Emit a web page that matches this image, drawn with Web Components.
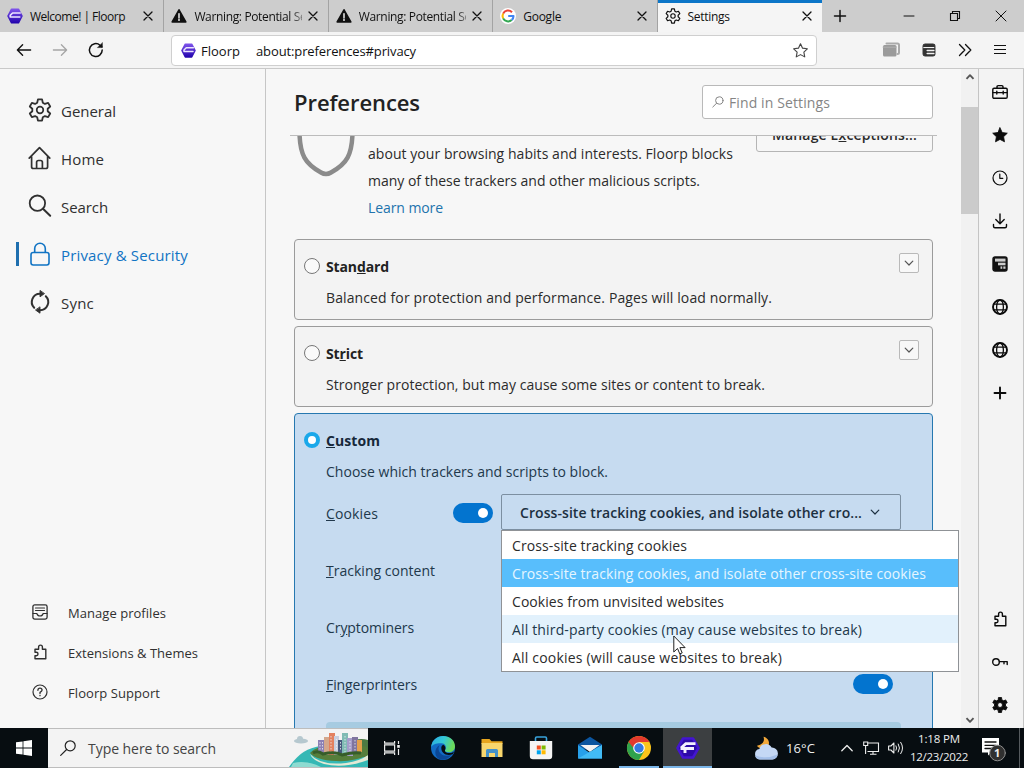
<!DOCTYPE html>
<html lang="en">
<head>
<meta charset="utf-8">
<title>Settings</title>
<style>
  body {
    margin: 0;
    width: 1024px;
    height: 768px;
    overflow: hidden;
    font-family: "Open Sans", "Noto Sans", sans-serif;
    font-size: 14px;
    color: #2b2b2b;
    background: #f7f7f7;
  }
</style>
</head>
<body>
<floorp-desktop></floorp-desktop>

<script>
// closed outline of a cog, first tooth pointing up
function cog(c, outer, inner, teeth, top, base) {
  const points = [];
  for (let i = 0; i < teeth; i++) {
    const mid = i * 360 / teeth - 90;
    [[inner, -base], [outer, -top], [outer, top], [inner, base]].forEach(([r, a]) => {
      const rad = (mid + a) * Math.PI / 180;
      points.push((c + r * Math.cos(rad)).toFixed(2) + " " + (c + r * Math.sin(rad)).toFixed(2));
    });
  }
  return "M" + points.join("L") + "Z";
}

const STAR = "M8 .8l2.2 4.7 5.1.7-3.7 3.5.9 5.1L8 12.4l-4.5 2.4.9-5.1L.7 6.2l5.1-.7z";
const PUZZLE = `<path d="M3 5.2h3.6V3a1.9 1.9 0 0 1 3.8 0v2.2h3.4v9.6H3v-3.1h1.3a1.7 1.7 0 0 0 0-3.4H3z" stroke-width="1.4"/>`;
const GLOBE = `<circle cx="8" cy="8" r="7" stroke-width="1.9"/><ellipse cx="8" cy="8" rx="3.4" ry="7" stroke-width="1.3"/><path d="M1.6 5.2h12.8M1.6 10.8h12.8" stroke-width="1.3"/>`;

// [viewBox size, markup]; strokes use currentColor unless set
const ICONS = {
  floorp: [16, `<defs><linearGradient id="g" x1="0" y1="0" x2="0" y2="1"><stop offset="0" stop-color="#7d52ea"/><stop offset="1" stop-color="#2405ae"/></linearGradient></defs>
    <path d="M4.6 1.2h6.8L15 8l-3.600 6.800H4.600L1 8z" fill="url(#g)" stroke="url(#g)" stroke-width="1.600"/>
    <path d="M13.200 5H5.600L3.200 7.400V9h9.600" stroke="#ece4ff" stroke-width="1.600"/>`],
  warning: [16, `<path d="M8 1.8L14.8 14H1.2z" fill="currentColor" stroke-width="1.6"/><path d="M8 5.6v4.2M8 11.3v1.1" stroke="#fff" stroke-width="1.4"/>`],
  google: [16, `<circle cx="8" cy="8" r="8" fill="#fff" stroke="none"/><g stroke-width="2.1" stroke-linecap="butt">
    <path d="M12 4.2A5.5 5.5 0 0 0 3.1 5.6" stroke="#ea4335"/><path d="M3.1 5.6a5.5 5.5 0 0 0 0 4.8" stroke="#fbbc05"/>
    <path d="M3.1 10.4a5.5 5.5 0 0 0 8.6 1.6" stroke="#34a853"/><path d="M11.7 12A5.2 5.2 0 0 0 13.5 8H8.2" stroke="#4285f4"/></g>`],
  close: [10, `<path d="M1 1l8 8M9 1L1 9" stroke-width="1.3"/>`],
  plus: [12, `<path d="M6 .5v11M.5 6h11" stroke-width="1.5"/>`],
  thickPlus: [12, `<path d="M6 .5v11M.5 6h11" stroke-width="1.9"/>`],
  minimize: [12, `<path d="M1 6h10" stroke-width="1"/>`],
  restore: [12, `<path d="M1.5 3.5h7v7h-7zM3.5 3.5v-2h7v7h-2" stroke-width="1.1" stroke-linejoin="miter"/>`],
  winClose: [12, `<path d="M1 1l10 10M11 1L1 11" stroke-width="1"/>`],
  back: [16, `<path d="M14.600 8H1.6M6.600 2.800L1.4 8l5.200 5.200" stroke-width="1.4"/>`],
  forward: [16, `<path d="M1.400 8h13M9.400 2.800L14.6 8l-5.200 5.200" stroke-width="1.3"/>`],
  reload: [16, `<path d="M14.2 8A6.4 6.4 0 1 1 12 3.2l1.8 1.6" stroke-width="1.5"/><path d="M14.4.9v4.7H9.7z" fill="currentColor" stroke-width=".5"/>`],
  starLine: [16, `<path d="${STAR}" stroke-width="1.2"/>`],
  star: [16, `<path d="${STAR}" fill="currentColor" stroke-width=".8"/>`],
  stack: [18, `<path d="M4.5 2.5h11q1.5 0 1.5 1.500v7.500q0 1.500-1.500 1.500" stroke="#aaa" stroke-width="2"/><rect x="1" y="4" width="13.500" height="11.500" rx="1.500" fill="#9b9b9b" stroke="none"/><path d="M1 6.200h13.500" stroke="#b8b8b8" stroke-width=".8"/>`],
  server: [16, `<rect x="1.200" y="1.200" width="13.600" height="13.600" rx="2.500" fill="#333" stroke="#333" stroke-width="1.200"/><path d="M1.500 5.200h12.500" stroke="#f3f3f3" stroke-width="1.200" stroke-linecap="butt"/><path d="M6 8.500h7.500M6 12h7.500" stroke="#f3f3f3" stroke-width="1.800"/>`],
  blocks: [16, `<rect x="1" y="1" width="14" height="14" rx="2" fill="#111" stroke="#111" stroke-width="1.400"/><g fill="#ccc" stroke="none"><rect x="3" y="2.600" width="10.500" height="3"/><rect x="6" y="6.700" width="7.500" height="2.600"/><rect x="8.500" y="10.400" width="1.800" height="2.400"/><rect x="11.300" y="10.400" width="2.200" height="2.400"/></g>`],
  more: [14, `<path d="M1.500 1.500L6.800 7l-5.300 5.500M7.500 1.500L12.800 7l-5.300 5.500" stroke-width="1.300"/>`],
  menu: [12, `<path d="M0 1.500h12M0 5.500h12M0 9.500h12" stroke-width="1.200" stroke-linecap="butt"/>`],
  gear: [24, `<path d="${cog(12, 10.8, 7.8, 6, 11, 21)}" stroke-width="1.800"/><circle cx="12" cy="12" r="3.300" stroke-width="1.700"/>`],
  gearFill: [16, `<path fill-rule="evenodd" d="${cog(8, 7.6, 5.6, 6, 12, 18)}M5.500 8a2.500 2.500 0 1 0 5 0a2.500 2.500 0 1 0-5 0z" fill="currentColor" stroke-width=".9"/>`],
  home: [24, `<path d="M1.200 12.200L11.500 1.600l10.300 10.600M3.600 10.500v10.200q0 1.800 1.800 1.800h12.400q1.800 0 1.800-1.800V10.500M8.600 22.300v-6q0-1.800 1.800-1.800h2.200q1.800 0 1.800 1.800v6" stroke-width="1.700"/>`],
  search: [24, `<circle cx="9.400" cy="9.200" r="7.700" stroke-width="1.800"/><path d="M15 14.800l7.200 7" stroke-width="2"/>`],
  lock: [24, `<rect x="3" y="10.500" width="18" height="12.500" rx="2.200" stroke-width="1.600"/><path d="M6.700 10.300V6.500a5.300 5.300 0 0 1 10.600 0v3.800" stroke-width="1.600"/>`],
  sync: [24, `<path d="M12 3.800A8.200 8.200 0 0 0 6.200 17.800M12 20.200A8.200 8.200 0 0 0 17.800 6.200" stroke-width="2"/><path d="M12 .8v6l4.200-3zM12 17.200v6l-4.200-3z" fill="currentColor" stroke-width=".9"/>`],
  profiles: [16, `<rect x=".9" y=".9" width="14.200" height="14.200" rx="1.800" stroke-width="1.300"/><path d="M3.500 4h9M3.500 6.500h9M1 9.500h3.800q.8 2.500 3.200 2.500t3.200-2.500H15" stroke-width="1.200"/>`],
  puzzle: [16, PUZZLE],
  help: [16, `<circle cx="8" cy="8" r="7" stroke-width="1.200"/><path d="M5.900 6.300Q6 4.200 8 4.200t2.100 1.900Q10.100 7.300 8 8.400v1.100M8 11.300v.4" stroke-width="1.300"/>`],
  find: [12, `<circle cx="7.300" cy="4.500" r="3.700" stroke-width="1"/><path d="M4.600 7.200L.8 11" stroke-width="1"/>`],
  chevron: [10, `<path d="M1.200 3.200L5 7l3.800-3.800" stroke-width="1.200"/>`],
  arrowUp: [10, `<path d="M1.500 6.800L5 3.200l3.500 3.600" stroke="#555" stroke-width="1.900" stroke-linecap="butt"/>`],
  arrowDown: [10, `<path d="M1.500 3.200L5 6.800l3.500-3.600" stroke="#555" stroke-width="1.900" stroke-linecap="butt"/>`],
  toolbox: [16, `<rect x=".8" y="4.300" width="14.400" height="10" rx="1.300" stroke-width="1.400"/><path d="M5 4V2.700Q5 1.600 6.100 1.600h3.800Q11 1.600 11 2.700V4M1 8.600h14M4.800 7.300v2.700M11.200 7.300v2.700" stroke-width="1.400"/>`],
  clock: [16, `<circle cx="8" cy="8" r="7" stroke-width="1.200"/><path d="M7.800 4v4.300h3" stroke-width="1.200"/>`],
  download: [16, `<path d="M8 1v9.500M3.800 6.600L8 10.700l4.200-4.100M1.500 11.500v1.700q0 1.500 1.500 1.500h10q1.500 0 1.500-1.500v-1.700" stroke-width="1.400"/>`],
  globe: [16, GLOBE],
  key: [16, `<circle cx="4" cy="8" r="3.300" stroke-width="1.400"/><path d="M7.400 7.600h7.800v3M12 7.700v2" stroke-width="1.400"/>`],
  windows: [16, `<path d="M0 2.300l6.600-.9v6.100H0zM7.400 1.300L16 .1v7.400H7.400zM0 8.400h6.600v6.200L0 13.700zM7.400 8.400H16v7.500l-8.600-1.200z" fill="#fff" stroke="none"/>`],
  taskSearch: [16, `<circle cx="10.200" cy="5.800" r="5" stroke-width="1.200"/><path d="M6.600 9.500L.7 15.400" stroke-width="1.200"/>`],
  taskView: [16, `<path d="M.6 1v2.200h10V1M.6 15v-2.200h10V15M.6 4.800h10v6.400H.6zM14.500 1v3M14.500 9v6" stroke="#eee" stroke-width="1.200" stroke-linejoin="miter" stroke-linecap="butt"/><path d="M13.200 5h2.600v2.800h-2.600z" fill="#eee" stroke="none"/>`],
  edge: [24, `<defs><linearGradient id="e" x1="0" y1="0" x2="1" y2=".3"><stop offset="0" stop-color="#2aa9e0"/><stop offset=".55" stop-color="#34c9d6"/><stop offset="1" stop-color="#6bd95a"/></linearGradient></defs>
    <circle cx="12" cy="12" r="12" fill="#126bc4" stroke="none"/>
    <path d="M.2 11C1 4 6 0 12 0c7 0 12 4.800 12 10.300 0 4-3 6-6.300 6-2.700 0-4-1-3.700-2 2-2.700 1-6.800-3.500-7.100C5.500 6.900 1.500 8.500.2 11z" fill="url(#e)" stroke="none"/>
    <path d="M7.500 12c0 6 5.500 9.500 13 6.800-3 4.400-8 6-12.500 4.200C3 20 3 12.500 8.500 9z" fill="#0b4796" stroke="none"/>
    <path d="M13.900 14.500c-.2 1.500 1.600 2.800 5 2.600 2-.1 3.300-.7 4.400-1.800l-1.600 3C15 20.500 10 17 10.300 11.500c.2-1.300 1-2.300 2-2.700 2 1 2.800 3.600 1.600 5.700z" fill="#080d11" stroke="none"/>`],
  folder: [24, `<path d="M1.500 3h8l2 2.300h11V8h-21z" fill="#e7a51e" stroke="none"/><path d="M1.500 7h21v14h-21z" fill="#f8d66d" stroke="none"/><path d="M6 21v-6.500q0-1.500 1.500-1.500h9q1.500 0 1.500 1.500V21h-3v-4H9v4z" fill="#4491c9" stroke="none"/>`],
  store: [24, `<path d="M6.500 5.500V2.300Q6.500 1 7.800 1h8.400q1.300 0 1.300 1.300v3.200" stroke="#39a3dc" stroke-width="1.600"/><path d="M.8 5h22.400v15q0 3.200-3.200 3.200H4Q.8 23.200.8 20z" fill="#f4f4f4" stroke="none"/><path d="M7.800 9.500h4v4h-4z" fill="#f25022" stroke="none"/><path d="M12.600 9.500h4v4h-4z" fill="#7fba00" stroke="none"/><path d="M7.800 14.300h4v4h-4z" fill="#00a4ef" stroke="none"/><path d="M12.600 14.300h4v4h-4z" fill="#ffb900" stroke="none"/>`],
  mail: [24, `<path d="M0 8.500L12 .8l12 7.700v5H0z" fill="#0b559f" stroke="none"/><path d="M2.500 9h19L12 16z" fill="#f2f2f2" stroke="none"/><path d="M0 9l12 8 12-8v13.500H0z" fill="#27a0ea" stroke="none"/><path d="M24 9L0 22.500h24z" fill="#42bbf5" stroke="none"/>`],
  chrome: [24, `<circle cx="12" cy="12" r="12" fill="#fbc51a" stroke="none"/><path d="M12 12L1.600 6A12 12 0 0 1 22.400 6H12z" fill="#e3392c" stroke="none"/><path d="M1.600 6a12 12 0 0 0 10.400 18l5.200-9L12 12z" fill="#2fa24c" stroke="none"/><path d="M1.600 6L7 15.500 12 12 12 6z" fill="#2fa24c" stroke="none"/><path d="M1.600 6H12v6H6.500z" fill="#e3392c" stroke="none"/><circle cx="12" cy="12" r="5.800" fill="#fff" stroke="none"/><circle cx="12" cy="12" r="4.700" fill="#3579e0" stroke="none"/>`],
  floorpBig: [24, `<path d="M7 2.500h10L22.500 12 17 21.500H7L1.500 12z" fill="#2d0aa8" stroke="#4315d0" stroke-width="2.500"/><path d="M19.500 7.600H9.800L5 12M18 12.500H4.500M9 12.500v4.500" stroke="#f4efff" stroke-width="2.900" stroke-linejoin="miter" stroke-linecap="butt"/>`],
  weather: [24, `<path d="M9.500.8c1.400 4-.4 7.800-6.500 9 2 4 12 4.500 12-3 0-3-2.500-5.200-5.500-6z" fill="#f2a83b" stroke="none"/><path d="M6 23.500a5.300 5.300 0 0 1-.6-10.500A6.600 6.600 0 0 1 17.600 11.600a5.900 5.900 0 0 1 .7 11.900z" fill="#c5d8f5" stroke="none"/><path d="M6 23.500a5 5 0 0 1-4.800-4q11 4 22.300-1a5.900 5.900 0 0 1-5.200 5z" fill="#a5c0ea" stroke="none"/>`],
  trayUp: [12, `<path d="M.8 8.800L6 3.500l5.200 5.300" stroke-width="1.300"/>`],
  network: [16, `<path d="M4.500 3h11v8.500H4.500M.7 2h4v3.500h-4zM2.600 5.500V14M10 11.700V14M7 14.300h6.500" stroke-width="1.100" stroke-linejoin="miter" stroke-linecap="butt"/>`],
  sound: [16, `<path d="M.6 6h2.300l3-3v10l-3-3H.6z" stroke-width="1.100"/><path d="M8 5.800q1.300 2.200 0 4.400M10.300 4q2.500 4 0 8M12.700 2.300q3.800 5.700 0 11.400" stroke-width="1"/>`],
  notes: [24, `<path d="M1 3h17v14.500h-8l-3 3v-3H1z" fill="#fff" stroke="none"/><path d="M4 7h11M4 10.300h11M4 13.500h7" stroke="#111" stroke-width="1.300"/><circle cx="16.500" cy="18" r="7.800" fill="#303030" stroke="#8d8d8d" stroke-width="1"/>`],
};

class UiIcon extends HTMLElement {
  constructor() {
    super();
    this.attachShadow({ mode: "open" });
  }

  connectedCallback() {
    const [box, markup] = ICONS[this.getAttribute("name")];
    const size = this.getAttribute("size") || box;
    this.shadowRoot.innerHTML = `
      <style>
        :host { display: inline-flex; flex: none; }
        svg { display: block; fill: none; stroke: currentColor; stroke-linecap: round; stroke-linejoin: round; overflow: visible; }
      </style>
      <svg width="${size}" height="${size}" viewBox="0 0 ${box} ${box}">${markup}</svg>
    `;
  }
}

class BrowserTab extends HTMLElement {
  constructor() {
    super();
    this.attachShadow({ mode: "open" });
  }

  connectedCallback() {
    this.shadowRoot.innerHTML = `
      <style>
        :host {
          display: flex; align-items: center; box-sizing: border-box;
          width: 164.4px; height: 32px; padding: 0 10px 0 7px; gap: 6px;
          border-right: 1px solid #a3a3a3; color: #111; font-size: 12px;
        }
        :host([active]) { background: #f5f5f5; border-right: 0; border-top: 3px solid #0c76c8; padding-bottom: 3px; }
        .title { display: flex; flex: 1; overflow: hidden; padding: 2px 0 0 1px; line-height: 20px; }
        .fade { -webkit-mask-image: linear-gradient(to right, #000 96px, transparent 118px); mask-image: linear-gradient(to right, #000 96px, transparent 118px); }
      </style>
      <ui-icon name="${this.getAttribute("icon")}" size="16"></ui-icon>
      <span class="title ${this.hasAttribute("clipped") ? "fade" : ""}"><slot></slot></span>
      <ui-icon name="close" size="10"></ui-icon>
    `;
  }
}

class NavBar extends HTMLElement {
  constructor() {
    super();
    this.attachShadow({ mode: "open" });
  }

  connectedCallback() {
    this.shadowRoot.innerHTML = `
      <style>
        :host {
          display: flex; align-items: center; box-sizing: border-box; height: 37px;
          padding: 0 18px 0 16px; background: #f4f4f4; border-bottom: 1px solid #c9c9c9; color: #111;
        }
        .buttons { display: flex; gap: 20px; width: 155px; }
        .url {
          display: flex; align-items: center; box-sizing: border-box; width: 646px; height: 31px;
          padding: 0 8px 0 9px; background: #fff; border: 1px solid #cfcfcf; border-radius: 4px; font-size: 13px;
        }
        .url fit-text { padding-top: 2px; }
        .url .brand { margin: 0 16px 0 5px; }
        .url .star { margin-left: auto; }
        .tools { display: flex; align-items: center; justify-content: space-between; margin-left: auto; width: 124px; }
      </style>
      <div class="buttons">
        <ui-icon name="back"></ui-icon>
        <ui-icon name="forward" style="color:#a5a5a5"></ui-icon>
        <ui-icon name="reload"></ui-icon>
      </div>
      <div class="url">
        <ui-icon name="floorp" size="15"></ui-icon>
        <fit-text class="brand" width="39">Floorp</fit-text>
        <fit-text width="160">about:preferences#privacy</fit-text>
        <ui-icon class="star" name="starLine" size="15" style="color:#444"></ui-icon>
      </div>
      <div class="tools">
        <ui-icon name="stack"></ui-icon>
        <ui-icon name="server" size="14"></ui-icon>
        <ui-icon name="more"></ui-icon>
        <ui-icon name="menu"></ui-icon>
      </div>
    `;
  }
}

class CategoryItem extends HTMLElement {
  constructor() {
    super();
    this.attachShadow({ mode: "open" });
  }

  connectedCallback() {
    const small = this.hasAttribute("small");
    this.shadowRoot.innerHTML = `
      <style>
        :host { display: flex; align-items: center; height: 48px; padding-left: 16px; font-size: 15px; color: #303030; }
        :host([selected]) { color: #1174c4; }
        :host([small]) { height: 40px; font-size: 13px; }
        .mark { width: 3px; height: 24px; margin: -2px 9px 0 0; }
        :host([selected]) .mark { background: #1f6faf; }
        ui-icon { margin: -2px 9px 0 0; }
        :host([small]) .mark { margin-right: 13px; }
        :host([small]) ui-icon { margin-right: 20px; }
      </style>
      <span class="mark"></span>
      <ui-icon name="${this.getAttribute("icon")}" size="${small ? 16 : 24}"></ui-icon>
      <slot></slot>
    `;
  }
}

class SideNav extends HTMLElement {
  constructor() {
    super();
    this.attachShadow({ mode: "open" });
  }

  connectedCallback() {
    this.shadowRoot.innerHTML = `
      <style>
        :host {
          display: flex; flex-direction: column; box-sizing: border-box; width: 266px;
          padding: 18px 0 15px; border-right: 1px solid #c6c6c6;
        }
        .bottom { margin-top: auto; }
      </style>
      <div>
        <category-item icon="gear"><fit-text width="55">General</fit-text></category-item>
        <category-item icon="home"><fit-text width="43">Home</fit-text></category-item>
        <category-item icon="search"><fit-text width="47">Search</fit-text></category-item>
        <category-item icon="lock" selected><fit-text width="127">Privacy &amp; Security</fit-text></category-item>
        <category-item icon="sync"><fit-text width="33">Sync</fit-text></category-item>
      </div>
      <div class="bottom">
        <category-item icon="profiles" small><fit-text width="98">Manage profiles</fit-text></category-item>
        <category-item icon="puzzle" small><fit-text width="130">Extensions &amp; Themes</fit-text></category-item>
        <category-item icon="help" small><fit-text width="92">Floorp Support</fit-text></category-item>
      </div>
    `;
  }
}

class ToggleSwitch extends HTMLElement {
  constructor() {
    super();
    this.attachShadow({ mode: "open" }).innerHTML = `
      <style>
        :host {
          display: flex; justify-content: flex-end; align-items: center; box-sizing: border-box;
          width: 40px; height: 20px; padding-right: 5px; border-radius: 10px; background: #0374cf;
        }
        i { width: 10px; height: 10px; border-radius: 50%; background: #fff; }
      </style>
      <i></i>
    `;
  }
}

class BlockingCard extends HTMLElement {
  constructor() {
    super();
    this.attachShadow({ mode: "open" }).innerHTML = `
      <style>
        :host {
          display: block; box-sizing: border-box; width: 639px; height: 81px; padding: 11px 13px 0 9px;
          border: 1px solid #9b9b9b; border-radius: 4px; background: #f3f3f3;
        }
        :host([checked]) { height: 340px; background: #c6dbf0; border-color: #2678b0; color: #21384b; }
        .head { display: flex; align-items: center; height: 31px; }
        .radio { box-sizing: border-box; width: 16px; height: 16px; margin: -1px 6px 0 0; border: 1px solid #777; border-radius: 50%; background: #fafafa; }
        :host([checked]) .radio { border: 4px solid #1aa8ea; background: #fff; }
        .title { display: flex; font-weight: 700; color: #222; }
        :host([checked]) .title { color: #16283a; }
        .expand {
          display: flex; align-items: center; justify-content: center; box-sizing: border-box; width: 20px; height: 20px;
          margin: -7px 0 0 auto; border: 1px solid #b9b9b9; border-radius: 2px; background: #f8f8f8; color: #555;
        }
        :host([checked]) .expand { visibility: hidden; }
        .body { display: flex; flex-direction: column; align-items: flex-start; padding-left: 22px; line-height: 31px; }
      </style>
      <div class="head">
        <span class="radio"></span>
        <span class="title"><slot name="title"></slot></span>
        <span class="expand"><ui-icon name="chevron"></ui-icon></span>
      </div>
      <div class="body"><slot></slot></div>
    `;
  }
}

class TrackerRow extends HTMLElement {
  constructor() {
    super();
    this.attachShadow({ mode: "open" }).innerHTML = `
      <style>
        :host { display: flex; align-items: center; width: 575px; height: 57px; line-height: 20px; }
        .controls { display: flex; align-items: center; gap: 8px; margin: -1px 0 0 auto; }
      </style>
      <slot></slot>
      <div class="controls"><slot name="control"></slot></div>
    `;
  }
}

class CookieSelect extends HTMLElement {
  constructor() {
    super();
    this.attachShadow({ mode: "open" });
  }

  connectedCallback() {
    // the popup hangs below the field and covers the rows behind it
    this.shadowRoot.innerHTML = `
      <style>
        :host { display: block; position: relative; width: 400px; height: 36px; }
        .field {
          display: flex; align-items: center; box-sizing: border-box; height: 36px; padding: 0 20px 0 18px;
          border: 1px solid #7c8fa1; border-radius: 2px; color: #1c3041; font-weight: 600;
        }
        .field fit-text { padding-top: 2px; }
        .field ui-icon { margin-left: auto; }
        .popup {
          position: absolute; left: 0; top: 36px; z-index: 5; box-sizing: border-box; width: 458px;
          border: 1px solid #8f9296; background: #fff; color: #2b2b2b;
        }
        .option { display: flex; align-items: center; box-sizing: border-box; height: 28px; padding: 2px 0 0 10px; }
        .current { background: #58befc; color: #e6f6ff; }
        .hover { background: #e2f1fc; color: #21384b; }
      </style>
      <div class="field">
        <fit-text width="342">Cross-site tracking cookies, and isolate other cro...</fit-text>
        <ui-icon name="chevron"></ui-icon>
      </div>
      <div class="popup">
        <div class="option"><fit-text width="175">Cross-site tracking cookies</fit-text></div>
        <div class="option current"><fit-text width="414">Cross-site tracking cookies, and isolate other cross-site cookies</fit-text></div>
        <div class="option"><fit-text width="212">Cookies from unvisited websites</fit-text></div>
        <div class="option hover"><fit-text width="350">All third-party cookies (may cause websites to break)</fit-text></div>
        <div class="option"><fit-text width="270">All cookies (will cause websites to break)</fit-text></div>
      </div>
    `;
  }
}

class PreferencesPane extends HTMLElement {
  constructor() {
    super();
    this.attachShadow({ mode: "open" });
  }

  connectedCallback() {
    this.shadowRoot.innerHTML = `
      <style>
        :host { display: flex; flex-direction: column; width: 695px; }
        header {
          display: flex; align-items: center; justify-content: space-between; box-sizing: border-box; flex: none;
          width: 647px; height: 67px; margin-left: 24px; padding: 0 4px 0 4px; border-bottom: 1px solid #bcbcbc;
        }
        h1 { display: flex; margin: 0; font-size: 22px; font-weight: 600; line-height: 30px; color: #222; }
        .find {
          display: flex; align-items: center; gap: 5px; box-sizing: border-box; width: 231px; height: 34px;
          padding-left: 9px; border: 1px solid #b9b9b9; border-radius: 3px; background: #fff; color: #858585;
        }
        .scroll { flex: 1; overflow: hidden; padding-left: 28px; }
        .intro { display: flex; height: 103px; }
        .shield { flex: none; width: 64px; height: 45px; }
        .about { display: flex; flex-direction: column; width: 388px; padding: 4px 0 0 10px; line-height: 27px; }
        .link { color: #2273ad; }
        .exceptions {
          display: flex; align-items: center; justify-content: center; box-sizing: border-box;
          width: 177px; height: 34px; margin-top: -18px; padding-bottom: 1px; border: 1px solid #b5b5b5; border-radius: 3px; font-weight: 600;
        }
        .cards { display: flex; flex-direction: column; gap: 6px; }
        .info { width: 575px; height: 40px; margin-top: 9px; border-radius: 4px; background: #a6cbe1; }
      </style>
      <header>
        <h1><fit-text width="126">Preferences</fit-text></h1>
        <div class="find"><ui-icon name="find"></ui-icon><fit-text width="101">Find in Settings</fit-text></div>
      </header>
      <div class="scroll">
        <div class="intro">
          <svg class="shield" viewBox="0 0 64 45" fill="none" stroke="#8b8b8b" stroke-width="4.500">
            <path d="M5.500-8C5 20 12 28 27 36.500Q32 39.500 37 36.500C52 28 59 20 58.500-8"/>
          </svg>
          <div class="about">
            <fit-text width="365">about your browsing habits and interests. Floorp blocks</fit-text>
            <fit-text width="332">many of these trackers and other malicious scripts.</fit-text>
            <fit-text class="link" width="75">Learn more</fit-text>
          </div>
          <div class="exceptions"><fit-text width="145">Manage E<u>x</u>ceptions...</fit-text></div>
        </div>
        <div class="cards">
          <blocking-card>
            <fit-text slot="title" width="63">Stan<u>d</u>ard</fit-text>
            <fit-text width="446">Balanced for protection and performance. Pages will load normally.</fit-text>
          </blocking-card>
          <blocking-card>
            <fit-text slot="title" width="37">St<u>r</u>ict</fit-text>
            <fit-text width="439">Stronger protection, but may cause some sites or content to break.</fit-text>
          </blocking-card>
          <blocking-card checked>
            <fit-text slot="title" width="54"><u>C</u>ustom</fit-text>
            <fit-text width="282">Choose which trackers and scripts to block.</fit-text>
            <tracker-row style="margin-top:-2px">
              <fit-text width="52"><u>C</u>ookies</fit-text>
              <toggle-switch slot="control"></toggle-switch>
              <cookie-select slot="control" style="margin:-1px 0 1px"></cookie-select>
            </tracker-row>
            <tracker-row><fit-text width="109"><u>T</u>racking content</fit-text></tracker-row>
            <tracker-row><fit-text width="88">Cr<u>y</u>ptominers</fit-text></tracker-row>
            <tracker-row>
              <fit-text width="91"><u>F</u>ingerprinters</fit-text>
              <toggle-switch slot="control" style="margin-right:8px"></toggle-switch>
            </tracker-row>
            <div class="info"></div>
          </blocking-card>
        </div>
      </div>
    `;
  }
}

class ScrollTrack extends HTMLElement {
  constructor() {
    super();
    this.attachShadow({ mode: "open" });
  }

  connectedCallback() {
    this.shadowRoot.innerHTML = `
      <style>
        :host { display: flex; flex-direction: column; align-items: center; box-sizing: border-box; width: 17px; padding: 3px 0; background: #f1f1f1; }
        .thumb { width: 17px; height: 107px; margin-top: 25px; background: #cbcbcb; }
        .down { margin-top: auto; }
      </style>
      <ui-icon name="arrowUp"></ui-icon>
      <div class="thumb"></div>
      <ui-icon class="down" name="arrowDown"></ui-icon>
    `;
  }
}

class ToolRail extends HTMLElement {
  constructor() {
    super();
    this.attachShadow({ mode: "open" });
  }

  connectedCallback() {
    const cell = (name, size = 16) => `<span><ui-icon name="${name}" size="${size}"></ui-icon></span>`;
    const top = [["toolbox"], ["star"], ["clock"], ["download"], ["blocks"], ["globe"], ["globe"], ["thickPlus", 12]];
    const bottom = [["puzzle"], ["key"], ["gearFill"]];
    this.shadowRoot.innerHTML = `
      <style>
        :host {
          display: flex; flex-direction: column; box-sizing: border-box; width: 46px; padding: 1px 2px 2px 0;
          border: 1px solid #c4c4c4; border-width: 0 1px; background: #f3f3f3; color: #0b0b0b;
        }
        span { display: flex; align-items: center; justify-content: center; height: 43px; }
        .bottom { margin-top: auto; }
      </style>
      <div>${top.map(i => cell(...i)).join("")}</div>
      <div class="bottom">${bottom.map(i => cell(...i)).join("")}</div>
    `;
  }
}

class TaskApp extends HTMLElement {
  constructor() {
    super();
    this.attachShadow({ mode: "open" });
  }

  connectedCallback() {
    this.shadowRoot.innerHTML = `
      <style>
        :host { display: flex; flex-direction: column; align-items: center; width: 49px; height: 40px; }
        :host([active]) { background: #3c3f41; }
        ui-icon { flex: 1; align-items: center; }
        i { width: 40px; height: 2px; margin-top: -2px; }
        :host([running]) i, :host([active]) i { background: #7ab5e8; }
        :host([active]) i { width: 49px; }
      </style>
      <ui-icon name="${this.getAttribute("icon")}" size="24"></ui-icon><i></i>
    `;
  }
}

class TaskBar extends HTMLElement {
  constructor() {
    super();
    this.attachShadow({ mode: "open" });
  }

  connectedCallback() {
    this.shadowRoot.innerHTML = `
      <style>
        :host { display: flex; align-items: center; flex: none; height: 40px; background: #070d11; color: #eee; font-size: 12px; }
        .start, .view { display: flex; flex: none; align-items: center; justify-content: center; width: 48px; }
        .search {
          display: flex; flex: none; align-items: center; box-sizing: border-box; width: 320px; height: 40px; padding-left: 12px;
          border: 1px solid #bdbdbd; border-width: 1px 0; background: #f3f3f3; color: #444; font-size: 14px;
        }
        .search fit-text { margin-left: 12px; }
        .city { margin-left: auto; }
        .apps { display: flex; flex: none; margin-left: 2px; }
        .weather { display: flex; flex: none; align-items: center; gap: 8px; margin-left: 42px; font-size: 13px; }
        .tray { display: flex; flex: none; align-items: center; gap: 9px; margin-left: 26px; }
        .tray ui-icon + ui-icon { margin-left: .5px; }
        .time { display: flex; flex: none; flex-direction: column; align-items: center; width: 58px; margin-left: 6px; font-size: 11.500px; line-height: 18px; }
        .notes { display: grid; flex: none; margin-left: 13px; }
        .notes > * { grid-area: 1 / 1; }
        .notes b { padding: 9px 0 0 13px; font-size: 11px; line-height: 18px; }
        .edge { width: 1px; height: 40px; margin-left: auto; margin-right: 4px; background: #555a5e; }
      </style>
      <div class="start"><ui-icon name="windows"></ui-icon></div>
      <div class="search">
        <ui-icon name="taskSearch" size="16" style="color:#222"></ui-icon>
        <fit-text width="128">Type here to search</fit-text>
        <svg class="city" width="80" height="38" viewBox="0 0 80 38">
          <ellipse cx="13" cy="12" rx="7" ry="2.500" fill="#b6c8cf"/><circle cx="12" cy="10" r="3" fill="#b6c8cf"/>
          <path d="M1 38C9 26 19 19 32 17h48v21z" fill="#35b8b5"/>
          <path d="M5 34q14-3 28 4H3z" fill="#8edbd1"/>
          <path d="M66 11q8-2 14 0v17H62z" fill="#4d7a43"/>
          <path d="M22 25q10 12 36 9 14-2 22-8v5q-24 9-44 4-12-4-14-10z" fill="#e3e9d5"/>
          <path d="M22 24q6-7 20-7h32q6 0 6 5v4q-14 7-32 6-20-1-26-8z" fill="#567e3b"/>
          <path d="M30 11h7v13h-7z" fill="#8b80b5"/><path d="M36 8h5v18h-5z" fill="#d3a78c"/>
          <path d="M41 4h6v22h-6z" fill="#e3815f"/><path d="M46 7h5v19h-5z" fill="#c8cfdf"/>
          <path d="M50 11h5v13h-5z" fill="#46597d"/><path d="M54 4h6v22h-6z" fill="#80bbb4"/>
          <path d="M59 9h6v18h-6z" fill="#a59dca"/><path d="M64 8h6v17h-6z" fill="#7f759f"/><path d="M69 11h5v12h-5z" fill="#e4a04c"/>
          <path d="M32 13v9M34.500 13v9M43 7v16M48.500 10v13M52.500 13v9M57 7v16M62 12v13M67 11v11" stroke="#eef0f2" stroke-width=".8" stroke-dasharray="1.500 1.500"/>
          <path d="M25 24q5-3 10 1 12-3 19 1 11-3 19-2" fill="none" stroke="#365d2a" stroke-width="3"/>
        </svg>
      </div>
      <div class="view"><ui-icon name="taskView"></ui-icon></div>
      <div class="apps">
        <task-app icon="edge"></task-app>
        <task-app icon="folder"></task-app>
        <task-app icon="store"></task-app>
        <task-app icon="mail"></task-app>
        <task-app icon="chrome" running></task-app>
        <task-app icon="floorpBig" active></task-app>
      </div>
      <div class="weather"><ui-icon name="weather"></ui-icon><fit-text width="29">16°C</fit-text></div>
      <div class="tray">
        <ui-icon name="trayUp"></ui-icon>
        <ui-icon name="network"></ui-icon>
        <ui-icon name="sound"></ui-icon>
      </div>
      <div class="time"><fit-text width="42">1:18 PM</fit-text><fit-text width="58">12/23/2022</fit-text></div>
      <div class="notes"><ui-icon name="notes"></ui-icon><b>1</b></div>
      <div class="edge"></div>
    `;
  }
}

class FloorpDesktop extends HTMLElement {
  constructor() {
    super();
    this.attachShadow({ mode: "open" });
  }

  connectedCallback() {
    this.shadowRoot.innerHTML = `
      <style>
        :host { display: flex; flex-direction: column; position: relative; width: 1024px; height: 768px; }
        .tabs { display: flex; align-items: center; flex: none; height: 32px; background: #cdcdcd; color: #111; }
        .tabs .new { margin-left: 12px; }
        .window { display: flex; justify-content: space-between; width: 104px; margin: 0 17px 0 auto; }
        nav-bar { flex: none; }
        main { display: flex; flex: 1; min-height: 0; }
        .cursor { position: absolute; left: 673px; top: 635px; z-index: 10; }
      </style>
      <div class="tabs">
        <browser-tab icon="floorp"><fit-text width="95">Welcome! | Floorp</fit-text></browser-tab>
        <browser-tab icon="warning" clipped><fit-text width="112">Warning: Potential Se</fit-text></browser-tab>
        <browser-tab icon="warning" clipped><fit-text width="112">Warning: Potential Se</fit-text></browser-tab>
        <browser-tab icon="google"><fit-text width="38">Google</fit-text></browser-tab>
        <browser-tab icon="gear" active><fit-text width="42">Settings</fit-text></browser-tab>
        <ui-icon class="new" name="plus"></ui-icon>
        <div class="window">
          <ui-icon name="minimize"></ui-icon>
          <ui-icon name="restore"></ui-icon>
          <ui-icon name="winClose"></ui-icon>
        </div>
      </div>
      <nav-bar></nav-bar>
      <main>
        <side-nav></side-nav>
        <preferences-pane></preferences-pane>
        <scroll-track></scroll-track>
        <tool-rail></tool-rail>
      </main>
      <task-bar></task-bar>
      <svg class="cursor" width="13" height="20" viewBox="0 0 13 20">
        <path d="M.8 1v16l3.700-3.500 2.300 5.400 2.400-1-2.300-5.300h5.200z" fill="#fff" stroke="#222" stroke-width="1"/>
      </svg>
    `;
  }
}

// one line of text, tracked so that it fills the given width
class FitText extends HTMLElement {
  constructor() {
    super();
    this.attachShadow({ mode: "open" }).innerHTML = `
      <style>
        :host { display: block; flex: none; width: max-content; white-space: nowrap; }
      </style>
      <slot></slot>
    `;
  }

  connectedCallback() {
    const target = Number(this.getAttribute("width"));
    const natural = this.getBoundingClientRect().width;
    const count = this.textContent.length;
    this.style.letterSpacing = (target - natural) / count + "px";
  }
}

customElements.define("ui-icon", UiIcon);
customElements.define("browser-tab", BrowserTab);
customElements.define("nav-bar", NavBar);
customElements.define("category-item", CategoryItem);
customElements.define("side-nav", SideNav);
customElements.define("toggle-switch", ToggleSwitch);
customElements.define("blocking-card", BlockingCard);
customElements.define("tracker-row", TrackerRow);
customElements.define("cookie-select", CookieSelect);
customElements.define("preferences-pane", PreferencesPane);
customElements.define("scroll-track", ScrollTrack);
customElements.define("tool-rail", ToolRail);
customElements.define("task-app", TaskApp);
customElements.define("task-bar", TaskBar);
customElements.define("floorp-desktop", FloorpDesktop);
customElements.define("fit-text", FitText);
</script>
</body>
</html>
